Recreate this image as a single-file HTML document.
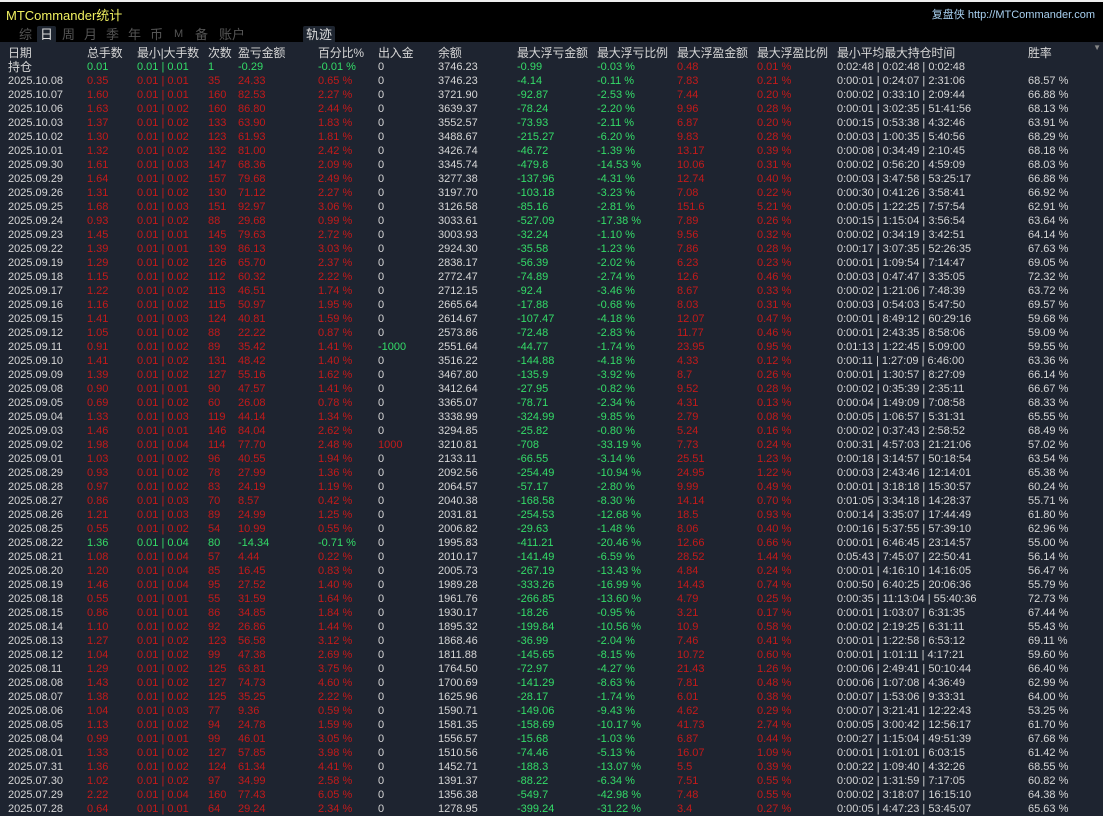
<!DOCTYPE html>
<html><head><meta charset="utf-8"><style>
body{margin:0;width:1103px;height:814px;overflow:hidden;background:#1e2430;font-family:"Liberation Sans","Noto Sans CJK SC",sans-serif;position:relative}
#top{position:absolute;left:0;top:0;width:1103px;height:42px;background:#000;border-top:2px solid #eee;box-sizing:border-box}
#title{position:absolute;left:6px;top:3px;color:#f0f060;font-size:13px}
#site{position:absolute;right:8px;top:4px;color:#a8d0f0;font-size:11px}
.tab{position:absolute;top:24px;font-size:13px;color:#555;height:17px;line-height:17px}
.on{background:#1e2530;color:#ddd;padding:0 3px;border-radius:2px}
.r{position:absolute;left:0;width:1103px;height:14px;line-height:14px;font-size:11px;color:#d6d6d6;white-space:nowrap}
.r span{position:absolute;top:0}
.r span:nth-child(1){left:8px}.r span:nth-child(2){left:87px}.r span:nth-child(3){left:137px}.r span:nth-child(4){left:208px}.r span:nth-child(5){left:238px}.r span:nth-child(6){left:318px}.r span:nth-child(7){left:378px}.r span:nth-child(8){left:438px}.r span:nth-child(9){left:517px}.r span:nth-child(10){left:597px}.r span:nth-child(11){left:677px}.r span:nth-child(12){left:757px}.r span:nth-child(13){left:837px}.r span:nth-child(14){left:1028px}
.r span:nth-child(n+2):nth-child(-n+6){color:#c41a1a}
.r span:nth-child(9),.r span:nth-child(10){color:#34dc68}
.r span:nth-child(11),.r span:nth-child(12){color:#c41a1a}
.r.g span:nth-child(n+2):nth-child(-n+6){color:#34dc68}
.r span.G{color:#34dc68}.r span.Rd{color:#c41a1a}
.h{font-size:12px;letter-spacing:-0.2px}.h span{color:#d6d6d6!important}
</style></head><body>
<div id="top">
<div id="title">MTCommander统计</div>
<div id="site">复盘侠 http://MTCommander.com</div>
<div class="tab" style="left:19px">综</div>
<div class="tab on" style="left:37px">日</div>
<div class="tab" style="left:62px">周</div>
<div class="tab" style="left:84px">月</div>
<div class="tab" style="left:106px">季</div>
<div class="tab" style="left:128px">年</div>
<div class="tab" style="left:150px">币</div>
<div class="tab" style="left:174px;font-size:11px">M</div>
<div class="tab" style="left:195px">备</div>
<div class="tab" style="left:219px">账户</div>
<div class="tab on" style="left:303px">轨迹</div>
</div>
<div style="position:absolute;right:2px;top:43px;color:#888;font-size:8px">▼</div>
<div class="r h" style="top:46px"><span>日期</span><span>总手数</span><span>最小|大手数</span><span>次数</span><span>盈亏金额</span><span>百分比%</span><span>出入金</span><span>余额</span><span>最大浮亏金额</span><span>最大浮亏比例</span><span>最大浮盈金额</span><span>最大浮盈比例</span><span>最小平均最大持仓时间</span><span>胜率</span></div>
<div class="r g" style="top:60px"><span style="font-size:12px">持仓</span><span>0.01</span><span>0.01 | 0.01</span><span>1</span><span>-0.29</span><span>-0.01 %</span><span>0</span><span>3746.23</span><span>-0.99</span><span>-0.03 %</span><span>0.48</span><span>0.01 %</span><span>0:02:48 | 0:02:48 | 0:02:48</span><span></span></div>
<div class="r" style="top:74px"><span>2025.10.08</span><span>0.35</span><span>0.01 | 0.01</span><span>35</span><span>24.33</span><span>0.65 %</span><span>0</span><span>3746.23</span><span>-4.14</span><span>-0.11 %</span><span>7.83</span><span>0.21 %</span><span>0:00:01 | 0:24:07 | 2:31:06</span><span>68.57 %</span></div>
<div class="r" style="top:88px"><span>2025.10.07</span><span>1.60</span><span>0.01 | 0.01</span><span>160</span><span>82.53</span><span>2.27 %</span><span>0</span><span>3721.90</span><span>-92.87</span><span>-2.53 %</span><span>7.44</span><span>0.20 %</span><span>0:00:02 | 0:33:10 | 2:09:44</span><span>66.88 %</span></div>
<div class="r" style="top:102px"><span>2025.10.06</span><span>1.63</span><span>0.01 | 0.02</span><span>160</span><span>86.80</span><span>2.44 %</span><span>0</span><span>3639.37</span><span>-78.24</span><span>-2.20 %</span><span>9.96</span><span>0.28 %</span><span>0:00:01 | 3:02:35 | 51:41:56</span><span>68.13 %</span></div>
<div class="r" style="top:116px"><span>2025.10.03</span><span>1.37</span><span>0.01 | 0.02</span><span>133</span><span>63.90</span><span>1.83 %</span><span>0</span><span>3552.57</span><span>-73.93</span><span>-2.11 %</span><span>6.87</span><span>0.20 %</span><span>0:00:15 | 0:53:38 | 4:32:46</span><span>63.91 %</span></div>
<div class="r" style="top:130px"><span>2025.10.02</span><span>1.30</span><span>0.01 | 0.02</span><span>123</span><span>61.93</span><span>1.81 %</span><span>0</span><span>3488.67</span><span>-215.27</span><span>-6.20 %</span><span>9.83</span><span>0.28 %</span><span>0:00:03 | 1:00:35 | 5:40:56</span><span>68.29 %</span></div>
<div class="r" style="top:144px"><span>2025.10.01</span><span>1.32</span><span>0.01 | 0.02</span><span>132</span><span>81.00</span><span>2.42 %</span><span>0</span><span>3426.74</span><span>-46.72</span><span>-1.39 %</span><span>13.17</span><span>0.39 %</span><span>0:00:08 | 0:34:49 | 2:10:45</span><span>68.18 %</span></div>
<div class="r" style="top:158px"><span>2025.09.30</span><span>1.61</span><span>0.01 | 0.03</span><span>147</span><span>68.36</span><span>2.09 %</span><span>0</span><span>3345.74</span><span>-479.8</span><span>-14.53 %</span><span>10.06</span><span>0.31 %</span><span>0:00:02 | 0:56:20 | 4:59:09</span><span>68.03 %</span></div>
<div class="r" style="top:172px"><span>2025.09.29</span><span>1.64</span><span>0.01 | 0.02</span><span>157</span><span>79.68</span><span>2.49 %</span><span>0</span><span>3277.38</span><span>-137.96</span><span>-4.31 %</span><span>12.74</span><span>0.40 %</span><span>0:00:03 | 3:47:58 | 53:25:17</span><span>66.88 %</span></div>
<div class="r" style="top:186px"><span>2025.09.26</span><span>1.31</span><span>0.01 | 0.02</span><span>130</span><span>71.12</span><span>2.27 %</span><span>0</span><span>3197.70</span><span>-103.18</span><span>-3.23 %</span><span>7.08</span><span>0.22 %</span><span>0:00:30 | 0:41:26 | 3:58:41</span><span>66.92 %</span></div>
<div class="r" style="top:200px"><span>2025.09.25</span><span>1.68</span><span>0.01 | 0.03</span><span>151</span><span>92.97</span><span>3.06 %</span><span>0</span><span>3126.58</span><span>-85.16</span><span>-2.81 %</span><span>151.6</span><span>5.21 %</span><span>0:00:05 | 1:22:25 | 7:57:54</span><span>62.91 %</span></div>
<div class="r" style="top:214px"><span>2025.09.24</span><span>0.93</span><span>0.01 | 0.02</span><span>88</span><span>29.68</span><span>0.99 %</span><span>0</span><span>3033.61</span><span>-527.09</span><span>-17.38 %</span><span>7.89</span><span>0.26 %</span><span>0:00:15 | 1:15:04 | 3:56:54</span><span>63.64 %</span></div>
<div class="r" style="top:228px"><span>2025.09.23</span><span>1.45</span><span>0.01 | 0.01</span><span>145</span><span>79.63</span><span>2.72 %</span><span>0</span><span>3003.93</span><span>-32.24</span><span>-1.10 %</span><span>9.56</span><span>0.32 %</span><span>0:00:02 | 0:34:19 | 3:42:51</span><span>64.14 %</span></div>
<div class="r" style="top:242px"><span>2025.09.22</span><span>1.39</span><span>0.01 | 0.01</span><span>139</span><span>86.13</span><span>3.03 %</span><span>0</span><span>2924.30</span><span>-35.58</span><span>-1.23 %</span><span>7.86</span><span>0.28 %</span><span>0:00:17 | 3:07:35 | 52:26:35</span><span>67.63 %</span></div>
<div class="r" style="top:256px"><span>2025.09.19</span><span>1.29</span><span>0.01 | 0.02</span><span>126</span><span>65.70</span><span>2.37 %</span><span>0</span><span>2838.17</span><span>-56.39</span><span>-2.02 %</span><span>6.23</span><span>0.23 %</span><span>0:00:01 | 1:09:54 | 7:14:47</span><span>69.05 %</span></div>
<div class="r" style="top:270px"><span>2025.09.18</span><span>1.15</span><span>0.01 | 0.02</span><span>112</span><span>60.32</span><span>2.22 %</span><span>0</span><span>2772.47</span><span>-74.89</span><span>-2.74 %</span><span>12.6</span><span>0.46 %</span><span>0:00:03 | 0:47:47 | 3:35:05</span><span>72.32 %</span></div>
<div class="r" style="top:284px"><span>2025.09.17</span><span>1.22</span><span>0.01 | 0.02</span><span>113</span><span>46.51</span><span>1.74 %</span><span>0</span><span>2712.15</span><span>-92.4</span><span>-3.46 %</span><span>8.67</span><span>0.33 %</span><span>0:00:02 | 1:21:06 | 7:48:39</span><span>63.72 %</span></div>
<div class="r" style="top:298px"><span>2025.09.16</span><span>1.16</span><span>0.01 | 0.02</span><span>115</span><span>50.97</span><span>1.95 %</span><span>0</span><span>2665.64</span><span>-17.88</span><span>-0.68 %</span><span>8.03</span><span>0.31 %</span><span>0:00:03 | 0:54:03 | 5:47:50</span><span>69.57 %</span></div>
<div class="r" style="top:312px"><span>2025.09.15</span><span>1.41</span><span>0.01 | 0.03</span><span>124</span><span>40.81</span><span>1.59 %</span><span>0</span><span>2614.67</span><span>-107.47</span><span>-4.18 %</span><span>12.07</span><span>0.47 %</span><span>0:00:01 | 8:49:12 | 60:29:16</span><span>59.68 %</span></div>
<div class="r" style="top:326px"><span>2025.09.12</span><span>1.05</span><span>0.01 | 0.02</span><span>88</span><span>22.22</span><span>0.87 %</span><span>0</span><span>2573.86</span><span>-72.48</span><span>-2.83 %</span><span>11.77</span><span>0.46 %</span><span>0:00:01 | 2:43:35 | 8:58:06</span><span>59.09 %</span></div>
<div class="r" style="top:340px"><span>2025.09.11</span><span>0.91</span><span>0.01 | 0.02</span><span>89</span><span>35.42</span><span>1.41 %</span><span class="G">-1000</span><span>2551.64</span><span>-44.77</span><span>-1.74 %</span><span>23.95</span><span>0.95 %</span><span>0:01:13 | 1:22:45 | 5:09:00</span><span>59.55 %</span></div>
<div class="r" style="top:354px"><span>2025.09.10</span><span>1.41</span><span>0.01 | 0.02</span><span>131</span><span>48.42</span><span>1.40 %</span><span>0</span><span>3516.22</span><span>-144.88</span><span>-4.18 %</span><span>4.33</span><span>0.12 %</span><span>0:00:11 | 1:27:09 | 6:46:00</span><span>63.36 %</span></div>
<div class="r" style="top:368px"><span>2025.09.09</span><span>1.39</span><span>0.01 | 0.02</span><span>127</span><span>55.16</span><span>1.62 %</span><span>0</span><span>3467.80</span><span>-135.9</span><span>-3.92 %</span><span>8.7</span><span>0.26 %</span><span>0:00:01 | 1:30:57 | 8:27:09</span><span>66.14 %</span></div>
<div class="r" style="top:382px"><span>2025.09.08</span><span>0.90</span><span>0.01 | 0.01</span><span>90</span><span>47.57</span><span>1.41 %</span><span>0</span><span>3412.64</span><span>-27.95</span><span>-0.82 %</span><span>9.52</span><span>0.28 %</span><span>0:00:02 | 0:35:39 | 2:35:11</span><span>66.67 %</span></div>
<div class="r" style="top:396px"><span>2025.09.05</span><span>0.69</span><span>0.01 | 0.02</span><span>60</span><span>26.08</span><span>0.78 %</span><span>0</span><span>3365.07</span><span>-78.71</span><span>-2.34 %</span><span>4.31</span><span>0.13 %</span><span>0:00:04 | 1:49:09 | 7:08:58</span><span>68.33 %</span></div>
<div class="r" style="top:410px"><span>2025.09.04</span><span>1.33</span><span>0.01 | 0.03</span><span>119</span><span>44.14</span><span>1.34 %</span><span>0</span><span>3338.99</span><span>-324.99</span><span>-9.85 %</span><span>2.79</span><span>0.08 %</span><span>0:00:05 | 1:06:57 | 5:31:31</span><span>65.55 %</span></div>
<div class="r" style="top:424px"><span>2025.09.03</span><span>1.46</span><span>0.01 | 0.01</span><span>146</span><span>84.04</span><span>2.62 %</span><span>0</span><span>3294.85</span><span>-25.82</span><span>-0.80 %</span><span>5.24</span><span>0.16 %</span><span>0:00:02 | 0:37:43 | 2:58:52</span><span>68.49 %</span></div>
<div class="r" style="top:438px"><span>2025.09.02</span><span>1.98</span><span>0.01 | 0.04</span><span>114</span><span>77.70</span><span>2.48 %</span><span class="Rd">1000</span><span>3210.81</span><span>-708</span><span>-33.19 %</span><span>7.73</span><span>0.24 %</span><span>0:00:31 | 4:57:03 | 21:21:06</span><span>57.02 %</span></div>
<div class="r" style="top:452px"><span>2025.09.01</span><span>1.03</span><span>0.01 | 0.02</span><span>96</span><span>40.55</span><span>1.94 %</span><span>0</span><span>2133.11</span><span>-66.55</span><span>-3.14 %</span><span>25.51</span><span>1.23 %</span><span>0:00:18 | 3:14:57 | 50:18:54</span><span>63.54 %</span></div>
<div class="r" style="top:466px"><span>2025.08.29</span><span>0.93</span><span>0.01 | 0.02</span><span>78</span><span>27.99</span><span>1.36 %</span><span>0</span><span>2092.56</span><span>-254.49</span><span>-10.94 %</span><span>24.95</span><span>1.22 %</span><span>0:00:03 | 2:43:46 | 12:14:01</span><span>65.38 %</span></div>
<div class="r" style="top:480px"><span>2025.08.28</span><span>0.97</span><span>0.01 | 0.02</span><span>83</span><span>24.19</span><span>1.19 %</span><span>0</span><span>2064.57</span><span>-57.17</span><span>-2.80 %</span><span>9.99</span><span>0.49 %</span><span>0:00:01 | 3:18:18 | 15:30:57</span><span>60.24 %</span></div>
<div class="r" style="top:494px"><span>2025.08.27</span><span>0.86</span><span>0.01 | 0.03</span><span>70</span><span>8.57</span><span>0.42 %</span><span>0</span><span>2040.38</span><span>-168.58</span><span>-8.30 %</span><span>14.14</span><span>0.70 %</span><span>0:01:05 | 3:34:18 | 14:28:37</span><span>55.71 %</span></div>
<div class="r" style="top:508px"><span>2025.08.26</span><span>1.21</span><span>0.01 | 0.03</span><span>89</span><span>24.99</span><span>1.25 %</span><span>0</span><span>2031.81</span><span>-254.53</span><span>-12.68 %</span><span>18.5</span><span>0.93 %</span><span>0:00:14 | 3:35:07 | 17:44:49</span><span>61.80 %</span></div>
<div class="r" style="top:522px"><span>2025.08.25</span><span>0.55</span><span>0.01 | 0.02</span><span>54</span><span>10.99</span><span>0.55 %</span><span>0</span><span>2006.82</span><span>-29.63</span><span>-1.48 %</span><span>8.06</span><span>0.40 %</span><span>0:00:16 | 5:37:55 | 57:39:10</span><span>62.96 %</span></div>
<div class="r g" style="top:536px"><span>2025.08.22</span><span>1.36</span><span>0.01 | 0.04</span><span>80</span><span>-14.34</span><span>-0.71 %</span><span>0</span><span>1995.83</span><span>-411.21</span><span>-20.46 %</span><span>12.66</span><span>0.66 %</span><span>0:00:01 | 6:46:45 | 23:14:57</span><span>55.00 %</span></div>
<div class="r" style="top:550px"><span>2025.08.21</span><span>1.08</span><span>0.01 | 0.04</span><span>57</span><span>4.44</span><span>0.22 %</span><span>0</span><span>2010.17</span><span>-141.49</span><span>-6.59 %</span><span>28.52</span><span>1.44 %</span><span>0:05:43 | 7:45:07 | 22:50:41</span><span>56.14 %</span></div>
<div class="r" style="top:564px"><span>2025.08.20</span><span>1.20</span><span>0.01 | 0.04</span><span>85</span><span>16.45</span><span>0.83 %</span><span>0</span><span>2005.73</span><span>-267.19</span><span>-13.43 %</span><span>4.84</span><span>0.24 %</span><span>0:00:01 | 4:16:10 | 14:16:05</span><span>56.47 %</span></div>
<div class="r" style="top:578px"><span>2025.08.19</span><span>1.46</span><span>0.01 | 0.04</span><span>95</span><span>27.52</span><span>1.40 %</span><span>0</span><span>1989.28</span><span>-333.26</span><span>-16.99 %</span><span>14.43</span><span>0.74 %</span><span>0:00:50 | 6:40:25 | 20:06:36</span><span>55.79 %</span></div>
<div class="r" style="top:592px"><span>2025.08.18</span><span>0.55</span><span>0.01 | 0.01</span><span>55</span><span>31.59</span><span>1.64 %</span><span>0</span><span>1961.76</span><span>-266.85</span><span>-13.60 %</span><span>4.79</span><span>0.25 %</span><span>0:00:35 | 11:13:04 | 55:40:36</span><span>72.73 %</span></div>
<div class="r" style="top:606px"><span>2025.08.15</span><span>0.86</span><span>0.01 | 0.01</span><span>86</span><span>34.85</span><span>1.84 %</span><span>0</span><span>1930.17</span><span>-18.26</span><span>-0.95 %</span><span>3.21</span><span>0.17 %</span><span>0:00:01 | 1:03:07 | 6:31:35</span><span>67.44 %</span></div>
<div class="r" style="top:620px"><span>2025.08.14</span><span>1.10</span><span>0.01 | 0.02</span><span>92</span><span>26.86</span><span>1.44 %</span><span>0</span><span>1895.32</span><span>-199.84</span><span>-10.56 %</span><span>10.9</span><span>0.58 %</span><span>0:00:02 | 2:19:25 | 6:31:11</span><span>55.43 %</span></div>
<div class="r" style="top:634px"><span>2025.08.13</span><span>1.27</span><span>0.01 | 0.02</span><span>123</span><span>56.58</span><span>3.12 %</span><span>0</span><span>1868.46</span><span>-36.99</span><span>-2.04 %</span><span>7.46</span><span>0.41 %</span><span>0:00:01 | 1:22:58 | 6:53:12</span><span>69.11 %</span></div>
<div class="r" style="top:648px"><span>2025.08.12</span><span>1.04</span><span>0.01 | 0.02</span><span>99</span><span>47.38</span><span>2.69 %</span><span>0</span><span>1811.88</span><span>-145.65</span><span>-8.15 %</span><span>10.72</span><span>0.60 %</span><span>0:00:01 | 1:01:11 | 4:17:21</span><span>59.60 %</span></div>
<div class="r" style="top:662px"><span>2025.08.11</span><span>1.29</span><span>0.01 | 0.02</span><span>125</span><span>63.81</span><span>3.75 %</span><span>0</span><span>1764.50</span><span>-72.97</span><span>-4.27 %</span><span>21.43</span><span>1.26 %</span><span>0:00:06 | 2:49:41 | 50:10:44</span><span>66.40 %</span></div>
<div class="r" style="top:676px"><span>2025.08.08</span><span>1.43</span><span>0.01 | 0.02</span><span>127</span><span>74.73</span><span>4.60 %</span><span>0</span><span>1700.69</span><span>-141.29</span><span>-8.63 %</span><span>7.81</span><span>0.48 %</span><span>0:00:06 | 1:07:08 | 4:36:49</span><span>62.99 %</span></div>
<div class="r" style="top:690px"><span>2025.08.07</span><span>1.38</span><span>0.01 | 0.02</span><span>125</span><span>35.25</span><span>2.22 %</span><span>0</span><span>1625.96</span><span>-28.17</span><span>-1.74 %</span><span>6.01</span><span>0.38 %</span><span>0:00:07 | 1:53:06 | 9:33:31</span><span>64.00 %</span></div>
<div class="r" style="top:704px"><span>2025.08.06</span><span>1.04</span><span>0.01 | 0.03</span><span>77</span><span>9.36</span><span>0.59 %</span><span>0</span><span>1590.71</span><span>-149.06</span><span>-9.43 %</span><span>4.62</span><span>0.29 %</span><span>0:00:07 | 3:21:41 | 12:22:43</span><span>53.25 %</span></div>
<div class="r" style="top:718px"><span>2025.08.05</span><span>1.13</span><span>0.01 | 0.02</span><span>94</span><span>24.78</span><span>1.59 %</span><span>0</span><span>1581.35</span><span>-158.69</span><span>-10.17 %</span><span>41.73</span><span>2.74 %</span><span>0:00:05 | 3:00:42 | 12:56:17</span><span>61.70 %</span></div>
<div class="r" style="top:732px"><span>2025.08.04</span><span>0.99</span><span>0.01 | 0.01</span><span>99</span><span>46.01</span><span>3.05 %</span><span>0</span><span>1556.57</span><span>-15.68</span><span>-1.03 %</span><span>6.87</span><span>0.44 %</span><span>0:00:27 | 1:15:04 | 49:51:39</span><span>67.68 %</span></div>
<div class="r" style="top:746px"><span>2025.08.01</span><span>1.33</span><span>0.01 | 0.02</span><span>127</span><span>57.85</span><span>3.98 %</span><span>0</span><span>1510.56</span><span>-74.46</span><span>-5.13 %</span><span>16.07</span><span>1.09 %</span><span>0:00:01 | 1:01:01 | 6:03:15</span><span>61.42 %</span></div>
<div class="r" style="top:760px"><span>2025.07.31</span><span>1.36</span><span>0.01 | 0.02</span><span>124</span><span>61.34</span><span>4.41 %</span><span>0</span><span>1452.71</span><span>-188.3</span><span>-13.07 %</span><span>5.5</span><span>0.39 %</span><span>0:00:22 | 1:09:40 | 4:32:26</span><span>68.55 %</span></div>
<div class="r" style="top:774px"><span>2025.07.30</span><span>1.02</span><span>0.01 | 0.02</span><span>97</span><span>34.99</span><span>2.58 %</span><span>0</span><span>1391.37</span><span>-88.22</span><span>-6.34 %</span><span>7.51</span><span>0.55 %</span><span>0:00:02 | 1:31:59 | 7:17:05</span><span>60.82 %</span></div>
<div class="r" style="top:788px"><span>2025.07.29</span><span>2.22</span><span>0.01 | 0.04</span><span>160</span><span>77.43</span><span>6.05 %</span><span>0</span><span>1356.38</span><span>-549.7</span><span>-42.98 %</span><span>7.48</span><span>0.55 %</span><span>0:00:02 | 3:18:07 | 16:15:10</span><span>64.38 %</span></div>
<div class="r" style="top:802px"><span>2025.07.28</span><span>0.64</span><span>0.01 | 0.01</span><span>64</span><span>29.24</span><span>2.34 %</span><span>0</span><span>1278.95</span><span>-399.24</span><span>-31.22 %</span><span>3.4</span><span>0.27 %</span><span>0:00:05 | 4:47:23 | 53:45:07</span><span>65.63 %</span></div>
</body></html>
